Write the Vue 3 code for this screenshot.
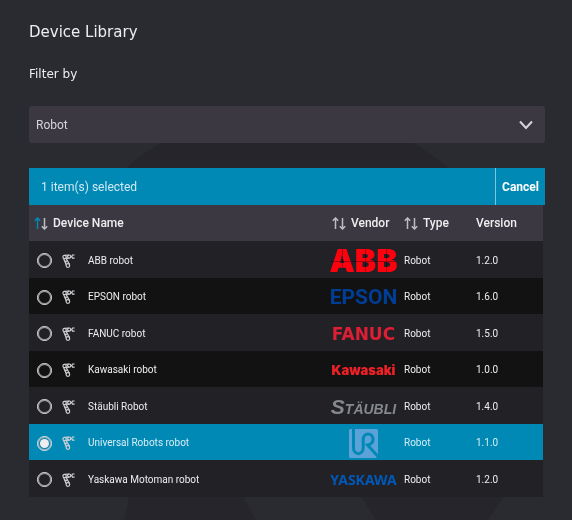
<script setup>
import { ref, computed } from 'vue'

const filter = ref('Robot')
const selected = ref('ur')

const devices = [
  { id: 'abb', name: 'ABB robot', vendor: 'ABB', type: 'Robot', version: '1.2.0' },
  { id: 'epson', name: 'EPSON robot', vendor: 'EPSON', type: 'Robot', version: '1.6.0' },
  { id: 'fanuc', name: 'FANUC robot', vendor: 'FANUC', type: 'Robot', version: '1.5.0' },
  { id: 'kawasaki', name: 'Kawasaki robot', vendor: 'Kawasaki', type: 'Robot', version: '1.0.0' },
  { id: 'staubli', name: 'Stäubli Robot', vendor: 'Stäubli', type: 'Robot', version: '1.4.0' },
  { id: 'ur', name: 'Universal Robots robot', vendor: 'Universal Robots', type: 'Robot', version: '1.1.0' },
  { id: 'yaskawa', name: 'Yaskawa Motoman robot', vendor: 'YASKAWA', type: 'Robot', version: '1.2.0' },
]

const columns = [
  { key: 'name', label: 'Device Name', sortable: true, active: true },
  { key: 'vendor', label: 'Vendor', sortable: true },
  { key: 'type', label: 'Type', sortable: true },
  { key: 'version', label: 'Version', sortable: false },
]

const count = computed(() => (selected.value ? 1 : 0))
</script>

<template>
  <main class="page">
    <svg class="backdrop" width="572" height="520" viewBox="0 0 572 520" aria-hidden="true">
      <path d="M129 500C60 420 20 330 70 238C118 152 200 108 287 108C374 108 456 152 504 238C550 320 552 420 504 496L488 520H376L361 496H243L256 520H124Z" />
    </svg>

    <h1 class="title">Device Library</h1>
    <label class="filter-label" for="filter">Filter by</label>
    <div class="select">
      <select id="filter" v-model="filter">
        <option>Robot</option>
      </select>
      <svg class="chevron" width="16" height="10" viewBox="0 0 16 10" aria-hidden="true">
        <path d="M2 1.500L8 8L14 1.500" />
      </svg>
    </div>

    <div class="selection">
      <span class="selection-text">{{ count }} item(s) selected</span>
      <button class="cancel" type="button" @click="selected = ''">Cancel</button>
    </div>

    <table class="devices">
      <colgroup>
        <col />
        <col class="col-vendor" />
        <col class="col-type" />
        <col class="col-version" />
      </colgroup>
      <thead>
        <tr>
          <th v-for="c in columns" :key="c.key" scope="col" :class="c.key">
            <button v-if="c.sortable" class="sort" type="button">
              <svg class="arrows" width="14" height="13" viewBox="0 0 14 13" aria-hidden="true">
                <path :class="{ active: c.active }" d="M3.5 12V1.5M0.8 3.8L3.5 1L6.2 3.8" />
                <path d="M10.500 1V11.500M7.800 9.200L10.500 12L13.200 9.200" />
              </svg>
              {{ c.label }}
            </button>
            <template v-else>{{ c.label }}</template>
          </th>
        </tr>
      </thead>
      <tbody>
        <tr v-for="d in devices" :key="d.id" :class="{ chosen: selected === d.id }">
          <td>
            <label class="device">
              <input v-model="selected" class="radio" type="radio" name="device" :value="d.id" />
              <svg class="arm" width="13" height="14" viewBox="0 0 13 14" aria-hidden="true">
                <circle cx="2.6" cy="3" r="1.7" />
                <circle cx="7.2" cy="2.6" r="1.6" />
                <path d="M2.6 1.3L7.2 1M3.800 4.400L7.200 4.200M8.800 2.600H10M12.600 1H10.500L9.800 2.600L10.500 4.200H12.600M1.600 4.600L4.200 10.800M4 4.400L7.400 10.300" />
                <circle cx="5.900" cy="11.500" r="1.800" />
                <circle cx="3.900" cy="7.500" r="0.500" />
              </svg>
              <span>{{ d.name }}</span>
            </label>
          </td>
          <td>
            <div class="logo" :class="d.id">
              <template v-if="d.id === 'ur'">
                <svg width="29" height="29" viewBox="0 0 29 29" role="img" aria-label="Universal Robots">
                  <path d="M1.500 0H27.500Q29 0 29 1.500V27L27 29H1.500Q0 29 0 27.500V1.500Q0 0 1.500 0Z" fill="#5aa2d8" />
                  <path d="M4.500 0V18.500C4.500 26.700 14.200 26.700 14.200 18.500V10.500C14.200 3.200 24 3.200 24 10.500C24 14 22 15.300 18.500 16L30 28.500" fill="none" stroke="#0089b5" stroke-width="3" />
                </svg>
              </template>
              <template v-else-if="d.id === 'staubli'"><span class="initial">S</span>TÄUBLI</template>
              <template v-else>{{ d.vendor }}</template>
            </div>
          </td>
          <td>{{ d.type }}</td>
          <td>{{ d.version }}</td>
        </tr>
      </tbody>
    </table>
  </main>
</template>

<style>
body {
  background: #2a2b30;
}
</style>

<style scoped>
.page {
  position: relative;
  isolation: isolate;
  box-sizing: border-box;
  min-height: 100vh;
  padding: 22px 27px 23px 29px;
  overflow: hidden;
  color: #eeeef0;
  font: 12px/16px Roboto, sans-serif;
}
.backdrop {
  position: absolute;
  z-index: -1;
  top: 0;
  left: 0;
  fill: #26252b;
}
.title {
  margin: 0 0 22px;
  font: 400 15px/20px "DejaVu Sans", sans-serif;
}
.filter-label {
  display: block;
  margin-bottom: 22px;
  font: 12px/20px "DejaVu Sans", sans-serif;
}
.select {
  display: grid;
  align-items: center;
  margin-bottom: 25px;
}
.select > * {
  grid-area: 1 / 1;
}
select {
  width: 100%;
  height: 37px;
  padding: 0 7px;
  border: 0;
  border-radius: 3px;
  appearance: none;
  background: #3b3841;
  color: #d5d5d9;
  font: inherit;
}
.chevron {
  justify-self: end;
  margin-right: 11px;
  pointer-events: none;
  fill: none;
  stroke: #d5d5d9;
  stroke-width: 2;
}
.selection {
  display: flex;
  height: 37px;
  background: #0089b5;
}
.selection-text {
  flex: 1;
  align-self: center;
  padding-left: 12px;
  color: #cfe9f2;
}
button {
  padding: 0;
  border: 0;
  background: none;
  color: inherit;
  font: inherit;
}
.cancel {
  padding: 0 6px;
  border-left: 1px solid #7fc4da;
  color: #fff;
  font-weight: 700;
}
.devices {
  width: calc(100% - 2px);
  table-layout: fixed;
  border-collapse: collapse;
  font-size: 10px;
}
.col-vendor {
  width: 73px;
}
.col-type {
  width: 72px;
}
.col-version {
  width: 67px;
}
th,
td {
  padding: 0;
  text-align: left;
}
td {
  padding-top: 2px;
}
th {
  height: 36px;
  background: #3b3841;
  font-size: 12px;
  font-weight: 500;
}
.name {
  padding-left: 5px;
}
.vendor {
  padding-left: 1px;
}
.sort {
  display: flex;
  align-items: center;
  gap: 5px;
}
.arrows {
  fill: none;
  stroke: #bdbcc2;
  stroke-width: 1.5;
}
.arrows .active {
  stroke: #0089b5;
}
tbody tr {
  height: 36px;
  background: #121212;
}
tbody tr:nth-child(odd) {
  height: 37px;
  background: #222126;
}
tbody tr.chosen {
  background: #0089b5;
  color: #d6edf5;
}
.device {
  display: flex;
  align-items: center;
  padding-left: 8px;
}
.radio {
  display: grid;
  place-items: center;
  box-sizing: border-box;
  width: 15px;
  height: 15px;
  margin: 0 10px 0 0;
  border: 1px solid #e8e8ea;
  border-radius: 50%;
  box-shadow: inset 0 0 0 1px #a3a3a7;
  appearance: none;
}
.radio:checked::before {
  content: "";
  width: 9px;
  height: 9px;
  border-radius: 50%;
  background: #eeeef0;
}
.arm {
  margin-right: 13px;
  fill: none;
  stroke: #cfcfd3;
  stroke-width: 1.2;
}
.logo {
  display: flex;
  align-items: center;
  justify-content: center;
  width: 65px;
  height: 30px;
  line-height: 30px;
  white-space: nowrap;
}
.abb {
  position: relative;
  color: #ff000f;
  font-family: Inter, sans-serif;
  font-size: 32px;
  font-weight: 900;
}
.abb::after {
  content: "";
  position: absolute;
  inset: 0;
  background:
    linear-gradient(#a50c19, #a50c19) 0 15px / 100% 1px no-repeat,
    linear-gradient(#a50c19, #a50c19) 11px 3px / 1px 18px no-repeat,
    linear-gradient(#a50c19, #a50c19) 34px 3px / 1px 24px no-repeat,
    linear-gradient(#a50c19, #a50c19) 55px 3px / 1px 24px no-repeat;
  mix-blend-mode: darken;
}
.epson {
  color: #003e95;
  font-size: 21px;
  font-weight: 700;
}
.fanuc {
  color: #dc1f35;
  font-family: "DejaVu Sans", sans-serif;
  font-size: 17px;
  font-weight: 700;
}
.kawasaki {
  color: #ee2127;
  font-family: Inter, sans-serif;
  font-size: 13px;
  font-weight: 900;
}
.staubli {
  align-items: baseline;
  color: #84898e;
  font-family: "Liberation Sans", sans-serif;
  font-size: 14px;
  font-style: italic;
  font-weight: 700;
}
.initial {
  font-size: 21px;
}
.yaskawa {
  color: #0058b8;
  font-family: "Noto Sans", sans-serif;
  font-size: 14px;
  font-weight: 700;
}
</style>
